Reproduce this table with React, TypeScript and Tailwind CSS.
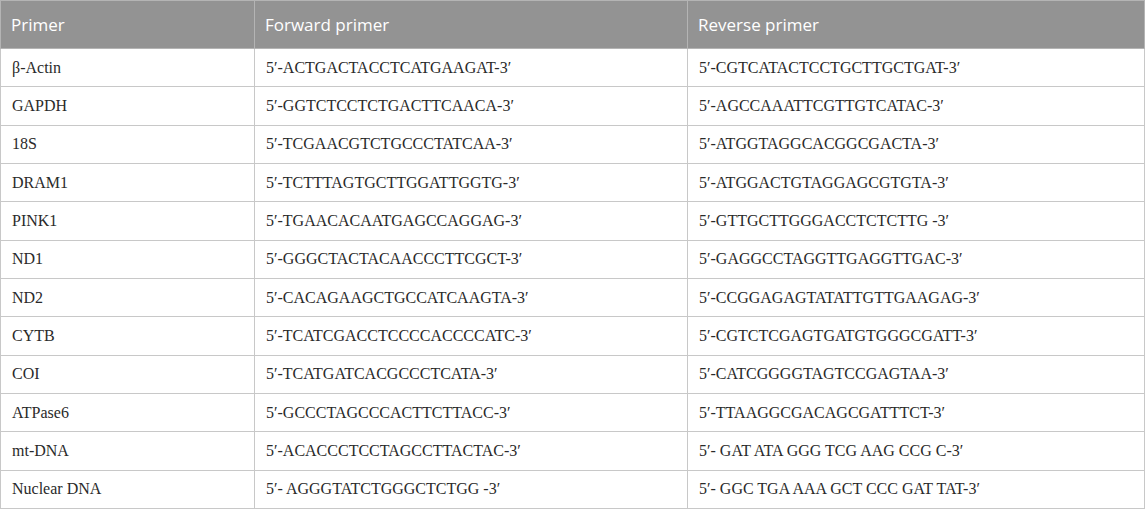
const rows: [string, string, string][] = [
  ['β-Actin', '5′-ACTGACTACCTCATGAAGAT-3′', '5′-CGTCATACTCCTGCTTGCTGAT-3′'],
  ['GAPDH', '5′-GGTCTCCTCTGACTTCAACA-3′', '5′-AGCCAAATTCGTTGTCATAC-3′'],
  ['18S', '5′-TCGAACGTCTGCCCTATCAA-3′', '5′-ATGGTAGGCACGGCGACTA-3′'],
  ['DRAM1', '5′-TCTTTAGTGCTTGGATTGGTG-3′', '5′-ATGGACTGTAGGAGCGTGTA-3′'],
  ['PINK1', '5′-TGAACACAATGAGCCAGGAG-3′', '5′-GTTGCTTGGGACCTCTCTTG -3′'],
  ['ND1', '5′-GGGCTACTACAACCCTTCGCT-3′', '5′-GAGGCCTAGGTTGAGGTTGAC-3′'],
  ['ND2', '5′-CACAGAAGCTGCCATCAAGTA-3′', '5′-CCGGAGAGTATATTGTTGAAGAG-3′'],
  ['CYTB', '5′-TCATCGACCTCCCCACCCCATC-3′', '5′-CGTCTCGAGTGATGTGGGCGATT-3′'],
  ['COI', '5′-TCATGATCACGCCCTCATA-3′', '5′-CATCGGGGTAGTCCGAGTAA-3′'],
  ['ATPase6', '5′-GCCCTAGCCCACTTCTTACC-3′', '5′-TTAAGGCGACAGCGATTTCT-3′'],
  ['mt-DNA', '5′-ACACCCTCCTAGCCTTACTAC-3′', '5′- GAT ATA GGG TCG AAG CCG C-3′'],
  ['Nuclear DNA', '5′- AGGGTATCTGGGCTCTGG -3′', '5′- GGC TGA AAA GCT CCC GAT TAT-3′'],
]

export default function App() {
  return (
    <div className="w-[1145px] h-[510px] bg-white">
      <table className="w-[1145px] border-collapse table-fixed">
        <colgroup>
          <col className="w-[254px]" />
          <col className="w-[433px]" />
          <col />
        </colgroup>
        <thead>
          <tr className="bg-[#939393] h-[48px]">
            {['Primer', 'Forward primer', 'Reverse primer'].map((h) => (
              <th
                key={h}
                className="border border-[#b4b4b4] px-[10px] text-left font-normal text-white text-[17px] font-['Open_Sans',sans-serif]"
              >
                {h}
              </th>
            ))}
          </tr>
        </thead>
        <tbody>
          {rows.map(([name, fwd, rev]) => (
            <tr key={name} className="h-[38.33px]">
              {[name, fwd, rev].map((c, i) => (
                <td
                  key={i}
                  className="border border-[#c8c8c8] px-[11px] text-[16px] text-[#2a2a2a] whitespace-pre font-['Liberation_Serif',serif]"
                >
                  {c}
                </td>
              ))}
            </tr>
          ))}
        </tbody>
      </table>
    </div>
  )
}
